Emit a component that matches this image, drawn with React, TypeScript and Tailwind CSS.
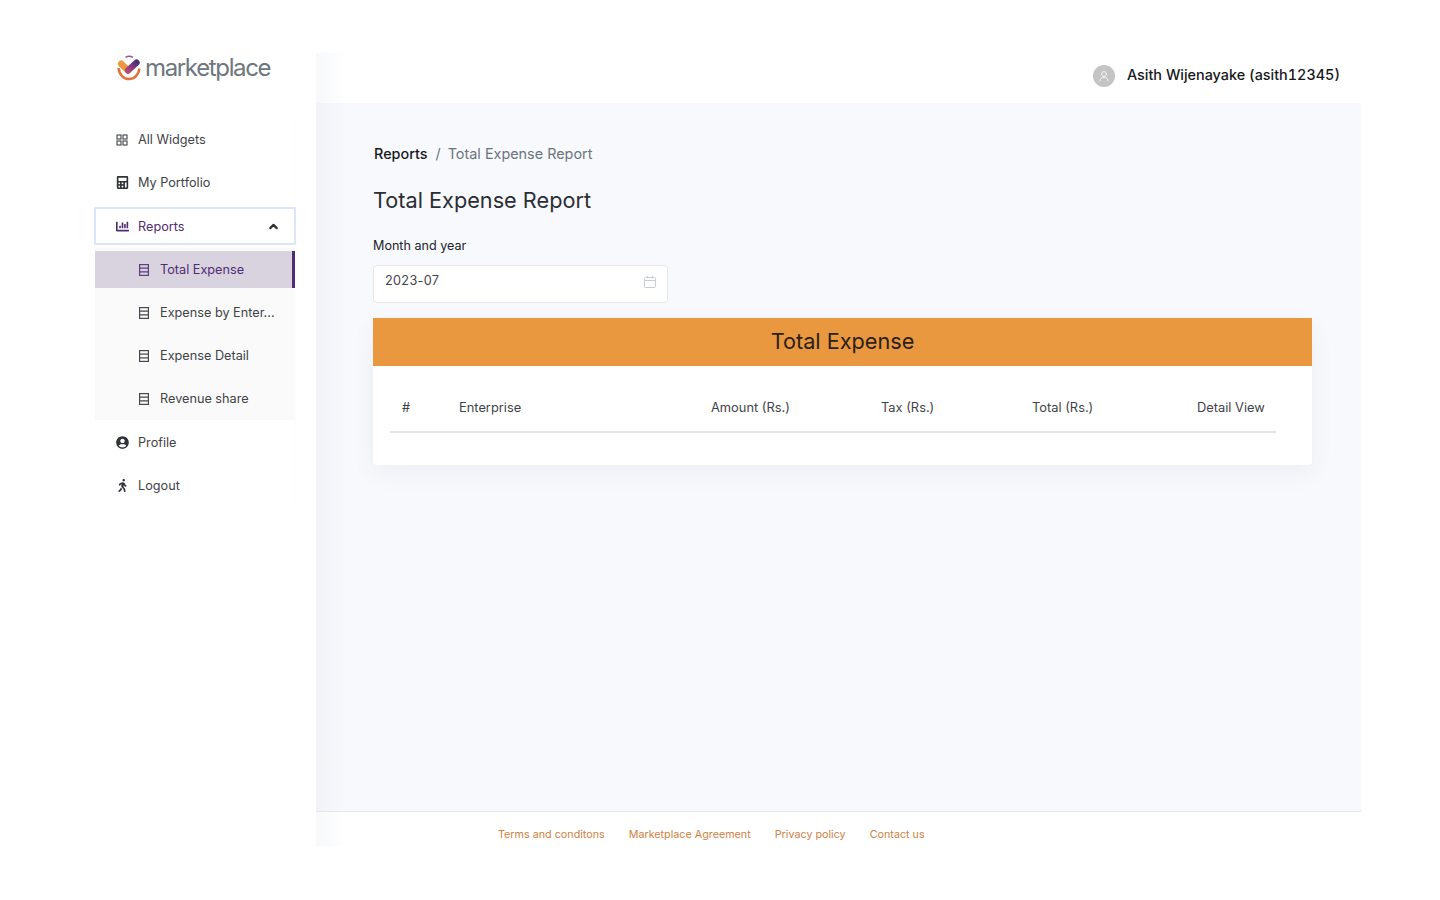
import { ChevronUp } from "lucide-react";
import { FaCalculator, FaChartBar, FaUserCircle, FaWalking } from "react-icons/fa";

const Logo = () => (
  <div className="flex items-center h-[30px]">
    <svg width="24" height="26" viewBox="0 0 24 26" fill="none" className="shrink-0">
      <defs>
        <linearGradient id="logoPurple" x1="0" y1="1" x2="1" y2="0">
          <stop offset="0" stopColor="#b0457f" />
          <stop offset="1" stopColor="#4f2d73" />
        </linearGradient>
      </defs>
      <path d="M8.5 2.4C10.5 1.2 14 1.2 16 2.4" stroke="#a0508c" strokeWidth="1.3" />
      <path d="M4.2 8.8L11 15.4" stroke="#ec9a3f" strokeWidth="6.6" strokeLinecap="round" />
      <path d="M11 15.4L19.6 7.6" stroke="url(#logoPurple)" strokeWidth="6.2" strokeLinecap="round" />
      <path d="M1.6 13C2.2 19.8 6.6 24 12 24C17.4 24 21.8 19.8 22.4 13.6" stroke="#e2723a" strokeWidth="2.6" />
    </svg>
    <span className="ml-[4px] text-[24px] font-normal leading-none tracking-[-1.35px] text-[#6e767e]">marketplace</span>
  </div>
);

const WidgetsIcon = () => (
  <svg width="12" height="12" viewBox="0 0 12 12" fill="none" stroke="#3f4348" strokeWidth="1.1" className="shrink-0">
    <rect x="1" y="1" width="4" height="4" />
    <rect x="7" y="1" width="4" height="4" />
    <rect x="1" y="7" width="4" height="4" />
    <rect x="7" y="7" width="4" height="4" />
  </svg>
);

const CalendarIcon = () => (
  <svg width="12" height="12" viewBox="0 0 12 12" fill="none" stroke="#c9ccd0" strokeWidth="1" className="mt-[4px] shrink-0">
    <rect x="0.5" y="1.5" width="11" height="10" rx="1" />
    <path d="M0.5 4.5H11.5M3.5 0V2.5M8.5 0V2.5" />
  </svg>
);

const SheetIcon = ({ color }: { color: string }) => (
  <svg width="12" height="14" viewBox="0 0 12 14" fill="none" stroke={color} strokeWidth="1.2" className="shrink-0">
    <rect x="1.6" y="1.6" width="8.8" height="10.8" />
    <path d="M1.6 5.2H10.4M1.6 8.8H10.4" />
  </svg>
);

const NavItem = ({ icon, label, low }: { icon: React.ReactNode; label: string; low?: boolean }) => (
  <div className={low ? "flex h-[43px] items-center pl-[21px] pt-[2px] text-[12.7px] text-[#3f4348]" : "flex h-[43px] items-center pl-[21px] text-[12.7px] text-[#3f4348]"}>
    <span className="flex w-[22px] shrink-0 items-center">{icon}</span>
    {label}
  </div>
);

const SubItem = ({ label, active }: { label: string; active?: boolean }) => (
  <div className="flex h-[43px] items-center">
    <div
      className={
        active
          ? "flex h-[37px] w-full items-center border-r-[3px] border-[#4f2d73] bg-[#d9d2df] pl-[43px] text-[12.7px] text-[#4f2d73]"
          : "flex h-[37px] w-full items-center pl-[43px] text-[12.7px] text-[#3f4348]"
      }
    >
      <span className="flex w-[22px] shrink-0 items-center">
        <SheetIcon color={active ? "#5b3f7c" : "#45494e"} />
      </span>
      {label}
    </div>
  </div>
);

export default function App() {
  return (
    <div className="flex h-[900px] w-[1440px] overflow-hidden bg-white pb-[54px] pl-[95px] pr-[79px] pt-[53px] font-['Inter',sans-serif] text-[#212529]">
      <aside className="w-[221px] shrink-0">
        <div className="pl-[22px]"><Logo /></div>
        <nav className="mt-[35px] w-[200px] shadow-[1px_0_3px_-1px_rgba(0,0,0,0.04)]">
          <NavItem icon={<WidgetsIcon />} label="All Widgets" />
          <NavItem icon={<FaCalculator size={13} color="#2f3236" />} label="My Portfolio" />
          <div className="flex h-[44px] items-center">
            <div className="-mx-[1px] flex h-[38px] flex-1 items-center rounded-[1px] border-2 border-[#dbe6fb] bg-white pl-[20px] pr-[14px] pt-[1px] text-[12.7px] text-[#4f2d73]">
              <span className="flex w-[22px] shrink-0 items-center"><FaChartBar size={13} color="#4f2d73" /></span>
              Reports
              <ChevronUp size={13} strokeWidth={4} color="#2c2f33" className="ml-auto" />
            </div>
          </div>
          <div className="bg-[#fafafa]">
            <SubItem label="Total Expense" active />
            <SubItem label="Expense by Enter..." />
            <SubItem label="Expense Detail" />
            <SubItem label="Revenue share" />
          </div>
          <NavItem icon={<FaUserCircle size={13} color="#2f3236" />} label="Profile" low />
          <NavItem icon={<FaWalking size={13} color="#2f3236" />} label="Logout" low />
        </nav>
      </aside>

      <div className="flex min-w-0 flex-1 flex-col">
        <header className="flex h-[50px] shrink-0 items-center justify-end bg-linear-to-r from-[#f7f8fa] to-white to-[3%] pb-[6px] pr-[21px]">
          <span className="mr-[12px] mt-[2px] flex h-[22px] w-[22px] items-center justify-center rounded-full bg-[#c4c4c4]">
            <svg width="12" height="12" viewBox="0 0 12 12" fill="none" stroke="#f4f4f4" strokeWidth="1">
              <circle cx="6" cy="4" r="2.4" />
              <path d="M2 11.2C2 8.8 3.6 7.4 6 7.4C8.4 7.4 10 8.8 10 11.2" />
            </svg>
          </span>
          <span className="text-[14.4px] font-medium tabular-nums text-[#16181b]">Asith Wijenayake (asith12345)</span>
        </header>

        <main className="flex-1 bg-linear-to-r from-[#f1f3f8] to-[#f8f9fd] to-[3%] pl-[57px] pr-[49px] pt-[42px]">
          <div className="flex h-[18px] items-center text-[14.4px]">
            <span className="pl-[1px] font-medium text-[#16181b]">Reports</span>
            <span className="ml-[8px] mr-[7px] text-[#6c757d]">/</span>
            <span className="text-[#6c757d]">Total Expense Report</span>
          </div>
          <h1 className="mt-[23px] text-[21.7px] leading-[29px] text-[#2b2e33]">Total Expense Report</h1>
          <label className="mt-[22px] block text-[12.6px] leading-[18px] text-[#212529]">Month and year</label>
          <div className="mt-[10px] flex h-[38px] w-[295px] items-start justify-between rounded-[4px] border border-[#e4e7ec] bg-white pl-[11px] pr-[11px] pt-[6px]">
            <span className="text-[12.7px] leading-[18px] tracking-[0.3px] text-[#3f4348]">2023-07</span>
            <CalendarIcon />
          </div>

          <section className="mt-[15px] rounded-b-[4px] bg-white shadow-[0_8px_24px_rgba(60,70,110,0.06)]">
            <div className="flex h-[48px] items-center justify-center bg-[#ea983f] pb-[1px] text-[21.7px] text-[#2a2118]">Total Expense</div>
            <div className="h-[99px] pl-[17px] pr-[36px] pt-[19px]">
              <table className="w-full table-fixed border-b-2 border-[#e2e5e8] text-left text-[12.85px] text-[#3f4348]">
                <thead>
                  <tr className="h-[47px]">
                    <th className="w-[57px] pl-[12px] font-normal">#</th>
                    <th className="w-[252px] pl-[12px] font-normal">Enterprise</th>
                    <th className="w-[170px] pl-[12px] font-normal">Amount (Rs.)</th>
                    <th className="w-[151px] pl-[12px] font-normal">Tax (Rs.)</th>
                    <th className="w-[165px] pl-[12px] font-normal">Total (Rs.)</th>
                    <th className="pl-[12px] font-normal">Detail View</th>
                  </tr>
                </thead>
              </table>
            </div>
          </section>
        </main>

        <footer className="flex h-[35px] shrink-0 items-center gap-[24px] border-t border-[#e4e6ea] bg-linear-to-r from-[#f7f8fa] to-white to-[3%] pl-[182px] pt-[12px] text-[10.75px] text-[#d0813f]">
          <span>Terms and conditons</span>
          <span>Marketplace Agreement</span>
          <span>Privacy policy</span>
          <span>Contact us</span>
        </footer>
      </div>
    </div>
  );
}
